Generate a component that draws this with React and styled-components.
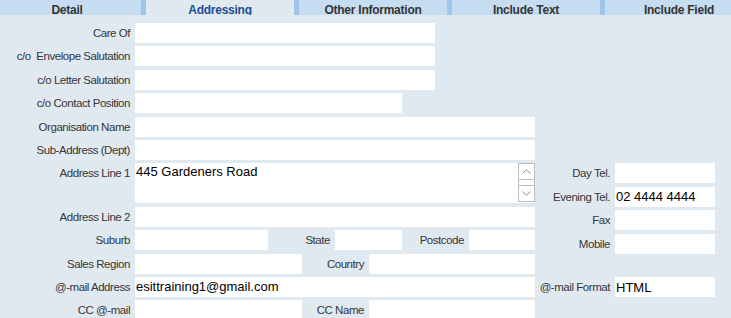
import React from "react";
import styled, { createGlobalStyle } from "styled-components";

const Global = createGlobalStyle`
  html, body { margin: 0; padding: 0; background: #e0e8f0; overflow: hidden; }
  body { font-family: "Liberation Sans", Arial, sans-serif; }
`;

const Page = styled.div`
  width: 731px;
  height: 318px;
  overflow: hidden;
  background: #e0e8f0;
`;

const TabBar = styled.div`
  display: flex;
  height: 15px;
  margin-left: -7px;
  background: #9fc6ea;
  gap: 5px;
  width: 760px;
`;

const Tab = styled.div`
  flex: 0 0 148px;
  height: 15px;
  overflow: hidden;
  box-sizing: border-box;
  padding-top: 2.5px;
  text-align: center;
  font: bold 12px/15px "Liberation Sans", Arial, sans-serif;
  letter-spacing: -0.25px;
  white-space: nowrap;
  background: ${(p) => (p.$active ? "#e0e8f0" : "#c5dcf1")};
  color: ${(p) => (p.$active ? "#1d4e93" : "#353535")};
`;

const Body = styled.div`
  display: flex;
  padding-top: 8px;
`;

const LeftCol = styled.div`
  width: 535px;
  display: flex;
  flex-direction: column;
  gap: 3.4px;
`;

const RightCol = styled.div`
  display: flex;
  flex-direction: column;
  gap: 3.4px;
  padding-top: 140.4px;
`;

const Row = styled.div`
  display: flex;
  align-items: flex-start;
  margin-top: ${(p) => p.$offset || 0}px;
`;

const Label = styled.div`
  flex: 0 0 ${(p) => p.$w}px;
  box-sizing: border-box;
  padding-right: 5px;
  text-align: right;
  white-space: pre;
  font-size: 11.5px;
  line-height: 20px;
  letter-spacing: -0.45px;
  color: #363636;
`;

const Field = styled.input`
  flex: 0 0 ${(p) => p.$w}px;
  width: ${(p) => p.$w}px;
  height: 20px;
  box-sizing: border-box;
  border: 0;
  outline: none;
  margin: 0;
  padding: 0 1px;
  background: #fff;
  color: #000;
  font: 13px "Liberation Sans", Arial, sans-serif;
`;

const AreaWrap = styled.div`
  display: flex;
  width: 400px;
  height: 40px;
  background: #fff;
`;

const Area = styled.textarea`
  flex: 1;
  height: 40px;
  box-sizing: border-box;
  border: 0;
  outline: none;
  resize: none;
  overflow: hidden;
  margin: 0;
  padding: 1px 1px;
  background: #fff;
  color: #000;
  font: 13px "Liberation Sans", Arial, sans-serif;
`;

const Spinner = styled.div`
  flex: 0 0 17px;
  height: 39px;
  box-sizing: border-box;
  border: 1px solid #bcbcbc;
  display: flex;
  flex-direction: column;
  background: #fff;
`;

const SpinBtn = styled.div`
  height: 15px;
  display: flex;
  align-items: center;
  justify-content: center;
  ${(p) => (p.$up ? "border-bottom: 1px solid #bcbcbc;" : "border-top: 1px solid #bcbcbc;")}
`;

const Track = styled.div`
  flex: 1;
`;

const Chevron = ({ up }) => (
  <svg width="9" height="5" viewBox="0 0 9 5">
    <polyline
      points={up ? "0.5,4.5 4.5,0.8 8.5,4.5" : "0.5,0.5 4.5,4.2 8.5,0.5"}
      fill="none"
      stroke="#8c8c8c"
      strokeWidth="1"
    />
  </svg>
);

const tabs = ["Detail", "Addressing", "Other Information", "Include Text", "Include Field"];

export default function App() {
  return (
    <Page>
      <Global />
      <TabBar>
        {tabs.map((t) => (
          <Tab key={t} $active={t === "Addressing"}>
            {t}
          </Tab>
        ))}
      </TabBar>
      <Body>
        <LeftCol>
          <Row>
            <Label $w={135}>Care Of</Label>
            <Field $w={300} readOnly value="" />
          </Row>
          <Row>
            <Label $w={135}>{"c/o  Envelope Salutation"}</Label>
            <Field $w={300} readOnly value="" />
          </Row>
          <Row>
            <Label $w={135}>c/o Letter Salutation</Label>
            <Field $w={300} readOnly value="" />
          </Row>
          <Row>
            <Label $w={135}>c/o Contact Position</Label>
            <Field $w={267} readOnly value="" />
          </Row>
          <Row>
            <Label $w={135}>Organisation Name</Label>
            <Field $w={400} readOnly value="" />
          </Row>
          <Row>
            <Label $w={135}>Sub-Address (Dept)</Label>
            <Field $w={400} readOnly value="" />
          </Row>
          <Row>
            <Label $w={135}>Address Line 1</Label>
            <AreaWrap>
              <Area readOnly value="445 Gardeners Road" />
              <Spinner>
                <SpinBtn $up>
                  <Chevron up />
                </SpinBtn>
                <Track />
                <SpinBtn>
                  <Chevron />
                </SpinBtn>
              </Spinner>
            </AreaWrap>
          </Row>
          <Row>
            <Label $w={135}>Address Line 2</Label>
            <Field $w={400} readOnly value="" />
          </Row>
          <Row>
            <Label $w={135}>Suburb</Label>
            <Field $w={133} readOnly value="" />
            <Label $w={67}>State</Label>
            <Field $w={67} readOnly value="" />
            <Label $w={67}>Postcode</Label>
            <Field $w={66} readOnly value="" />
          </Row>
          <Row>
            <Label $w={135}>Sales Region</Label>
            <Field $w={167} readOnly value="" />
            <Label $w={67}>Country</Label>
            <Field $w={166} readOnly value="" />
          </Row>
          <Row>
            <Label $w={135}>@-mail Address</Label>
            <Field $w={400} readOnly value="esittraining1@gmail.com" />
          </Row>
          <Row>
            <Label $w={135}>CC @-mail</Label>
            <Field $w={167} readOnly value="" />
            <Label $w={67}>CC Name</Label>
            <Field $w={166} readOnly value="" />
          </Row>
        </LeftCol>
        <RightCol>
          <Row>
            <Label $w={80}>Day Tel.</Label>
            <Field $w={100} readOnly value="" />
          </Row>
          <Row>
            <Label $w={80}>Evening Tel.</Label>
            <Field $w={100} readOnly value="02 4444 4444" />
          </Row>
          <Row>
            <Label $w={80}>Fax</Label>
            <Field $w={100} readOnly value="" />
          </Row>
          <Row>
            <Label $w={80}>Mobile</Label>
            <Field $w={100} readOnly value="" />
          </Row>
          <Row $offset={20.4}>
            <Label $w={80}>@-mail Format</Label>
            <Field $w={100} readOnly value="HTML" />
          </Row>
        </RightCol>
      </Body>
    </Page>
  );
}
